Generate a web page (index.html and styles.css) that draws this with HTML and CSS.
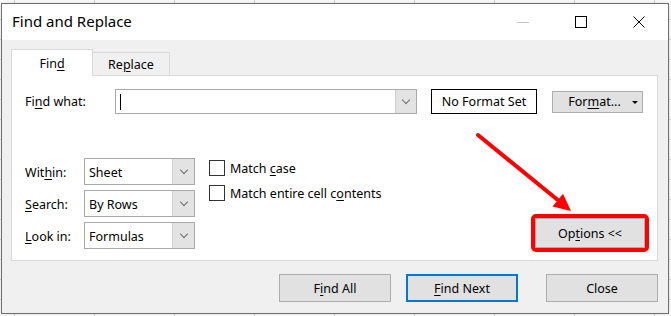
FILE: index.html
```html
<!DOCTYPE html>
<html lang="en">
<head>
    <meta charset="UTF-8">
    <title>Find and Replace</title>
    <link rel="stylesheet" href="styles.css">
</head>
<body>
    <div class="dialog">
        <div class="titlebar">
            <span class="title">Find and Replace</span>
            <div class="caption-buttons">
                <span class="cap-btn">
                    <svg width="12" height="12" viewBox="0 0 12 12"><path d="M0 6.5H12" stroke="#c4c4c4" stroke-width="1"/></svg>
                </span>
                <span class="cap-btn">
                    <svg width="12" height="12" viewBox="0 0 12 12"><rect x="0.5" y="0.5" width="11" height="11" fill="none" stroke="#000" stroke-width="1"/></svg>
                </span>
                <span class="cap-btn">
                    <svg width="12" height="12" viewBox="0 0 12 12"><path d="M0.5 0.5L11.5 11.5M11.5 0.5L0.5 11.5" stroke="#000" stroke-width="1"/></svg>
                </span>
            </div>
        </div>

        <div class="dialog-body">
            <div class="tabs">
                <div class="tab active"><span>Fin<u>d</u></span></div>
                <div class="tab"><span>Re<u>p</u>lace</span></div>
            </div>

            <div class="panel">
                <div class="find-row">
                    <label class="find-label">Fi<u>n</u>d what:</label>
                    <div class="combo find-combo">
                        <div class="combo-field"><span class="caret"></span></div>
                        <div class="combo-arrow"><span class="chevron"></span></div>
                    </div>
                    <div class="format-preview">No Format Set</div>
                    <button class="btn format-btn"><span>For<u>m</u>at...</span><span class="drop-tri"></span></button>
                </div>

                <div class="options-area">
                    <div class="fields">
                        <div class="field-row">
                            <label class="field-label">Wit<u>h</u>in:</label>
                            <div class="combo select">
                                <div class="combo-field">Sheet</div>
                                <div class="combo-arrow"><span class="chevron"></span></div>
                            </div>
                        </div>
                        <div class="field-row">
                            <label class="field-label"><u>S</u>earch:</label>
                            <div class="combo select">
                                <div class="combo-field">By Rows</div>
                                <div class="combo-arrow"><span class="chevron"></span></div>
                            </div>
                        </div>
                        <div class="field-row">
                            <label class="field-label"><u>L</u>ook in:</label>
                            <div class="combo select">
                                <div class="combo-field">Formulas</div>
                                <div class="combo-arrow"><span class="chevron"></span></div>
                            </div>
                        </div>
                    </div>

                    <div class="checks">
                        <label class="check"><span class="box"></span><span>Match <u>c</u>ase</span></label>
                        <label class="check"><span class="box"></span><span>Match entire cell c<u>o</u>ntents</span></label>
                    </div>

                    <button class="btn options-btn"><span>Op<u>t</u>ions &lt;&lt;</span></button>
                </div>
            </div>

            <div class="actions">
                <button class="btn action"><span>F<u>i</u>nd All</span></button>
                <button class="btn action primary"><span><u>F</u>ind Next</span></button>
                <button class="btn action close-btn">Close</button>
            </div>
        </div>
    </div>

    <svg class="annotation" width="671" height="316" viewBox="0 0 671 316">
        <line x1="478" y1="135" x2="559" y2="201" stroke="#ff0000" stroke-width="4" stroke-linecap="round"/>
        <polygon points="571,211 552.5,206.5 563,193.8" fill="#ff0000"/>
    </svg>
</body>
</html>
```

FILE: styles.css
```css
* {
    box-sizing: border-box;
}
body {
    margin: 0;
    padding: 3px 0 0 1px;
    width: 671px;
    height: 316px;
    overflow: hidden;
    position: relative;
    font-family: "Noto Sans", "Open Sans", sans-serif;
    font-size: 12.5px;
    color: #000;
    background-color: #fff;
    background-image:
        repeating-linear-gradient(90deg, transparent 0 14px, #d4d4d4 14px 15px, transparent 15px 80px),
        repeating-linear-gradient(180deg, transparent 0 19px, #d4d4d4 19px 20px);
}
u {
    text-decoration: underline;
    text-underline-offset: 2px;
}
.dialog {
    width: 668px;
    height: 311px;
    border: 1px solid #6e6e6e;
    background: #f0f0f0;
    display: flex;
    flex-direction: column;
    box-shadow: 0 0 6px rgba(0, 0, 0, 0.15);
}
.titlebar {
    height: 36px;
    background: #fff;
    display: flex;
    align-items: center;
    justify-content: space-between;
}
.title {
    font-size: 15px;
    padding-left: 10px;
    padding-bottom: 2px;
}
.caption-buttons {
    display: flex;
    height: 100%;
}
.cap-btn {
    width: 58px;
    display: flex;
    align-items: center;
    justify-content: center;
}
.cap-btn svg {
    display: block;
}
.dialog-body {
    flex: 1;
    padding: 9px 10px 10px 9px;
    display: flex;
    flex-direction: column;
}
.tabs {
    display: flex;
    align-items: flex-end;
    height: 26px;
    position: relative;
    z-index: 1;
}
.tab {
    height: 23px;
    width: 77px;
    border: 1px solid #d9d9d9;
    border-left: none;
    border-bottom: none;
    background: #f0f0f0;
    display: flex;
    align-items: center;
    justify-content: center;
    padding-top: 1px;
}
.tab.active {
    height: 27px;
    width: 82px;
    border-left: 1px solid #d9d9d9;
    background: #fff;
    margin-bottom: -1px;
    padding-top: 0;
}
.panel {
    background: #fff;
    border: 1px solid #d9d9d9;
    padding: 13px 12px 11px 13px;
}
.find-row {
    display: flex;
    align-items: center;
    height: 25px;
}
.find-label {
    width: 90px;
}
.combo {
    display: flex;
    height: 100%;
    border: 1px solid #a9a9a9;
    background: #fff;
}
.find-combo {
    width: 302px;
}
.combo-field {
    flex: 1;
    display: flex;
    align-items: center;
    padding-left: 4px;
    padding-top: 1px;
}
.caret {
    width: 1px;
    height: 16px;
    background: #000;
}
.combo-arrow {
    width: 21px;
    background: #e3e3e3;
    border-left: 1px solid #cfcfcf;
    display: flex;
    align-items: center;
    justify-content: center;
}
.chevron {
    width: 6px;
    height: 6px;
    border-right: 1px solid #707070;
    border-bottom: 1px solid #707070;
    transform: translateY(-2px) rotate(45deg);
}
.format-preview {
    margin-left: 14px;
    width: 106px;
    height: 25px;
    border: 1px solid #000;
    display: flex;
    align-items: center;
    justify-content: center;
}
.btn {
    font: inherit;
    color: #000;
    background: #e1e1e1;
    border: 1px solid #adadad;
    padding: 0;
    display: flex;
    align-items: center;
    justify-content: center;
}
.format-btn {
    margin-left: 15px;
    width: 91px;
    height: 22px;
    position: relative;
    padding-right: 6px;
}
.drop-tri {
    position: absolute;
    right: 4px;
    top: 9px;
    border-left: 3px solid transparent;
    border-right: 3px solid transparent;
    border-top: 3px solid #000;
}
.options-area {
    display: flex;
    align-items: flex-start;
    margin-top: 44px;
}
.fields {
    display: flex;
    flex-direction: column;
    gap: 5px;
}
.field-row {
    display: flex;
    align-items: center;
    height: 27px;
}
.field-label {
    width: 59px;
    padding-top: 1px;
}
.select {
    width: 111px;
}
.select .combo-arrow {
    width: 22px;
}
.checks {
    margin-left: 14px;
    padding-top: 2px;
    display: flex;
    flex-direction: column;
    gap: 9px;
}
.check {
    display: flex;
    align-items: center;
    height: 16px;
}
.box {
    width: 16px;
    height: 16px;
    border: 1px solid #333;
    background: #fff;
    margin-right: 5px;
}
.options-btn {
    margin-left: auto;
    align-self: flex-end;
    width: 110px;
    height: 30px;
    margin-bottom: 1px;
    outline: 4px solid #ff0000;
    border-radius: 1px;
}
.actions {
    display: flex;
    justify-content: flex-end;
    margin-top: 13px;
}
.action {
    width: 112px;
    height: 28px;
}
.action + .action {
    margin-left: 15px;
}
.primary {
    border: 2px solid #0078d7;
}
.close-btn {
    margin-left: 28px !important;
}
.annotation {
    position: absolute;
    left: 0;
    top: 0;
    pointer-events: none;
}
```
